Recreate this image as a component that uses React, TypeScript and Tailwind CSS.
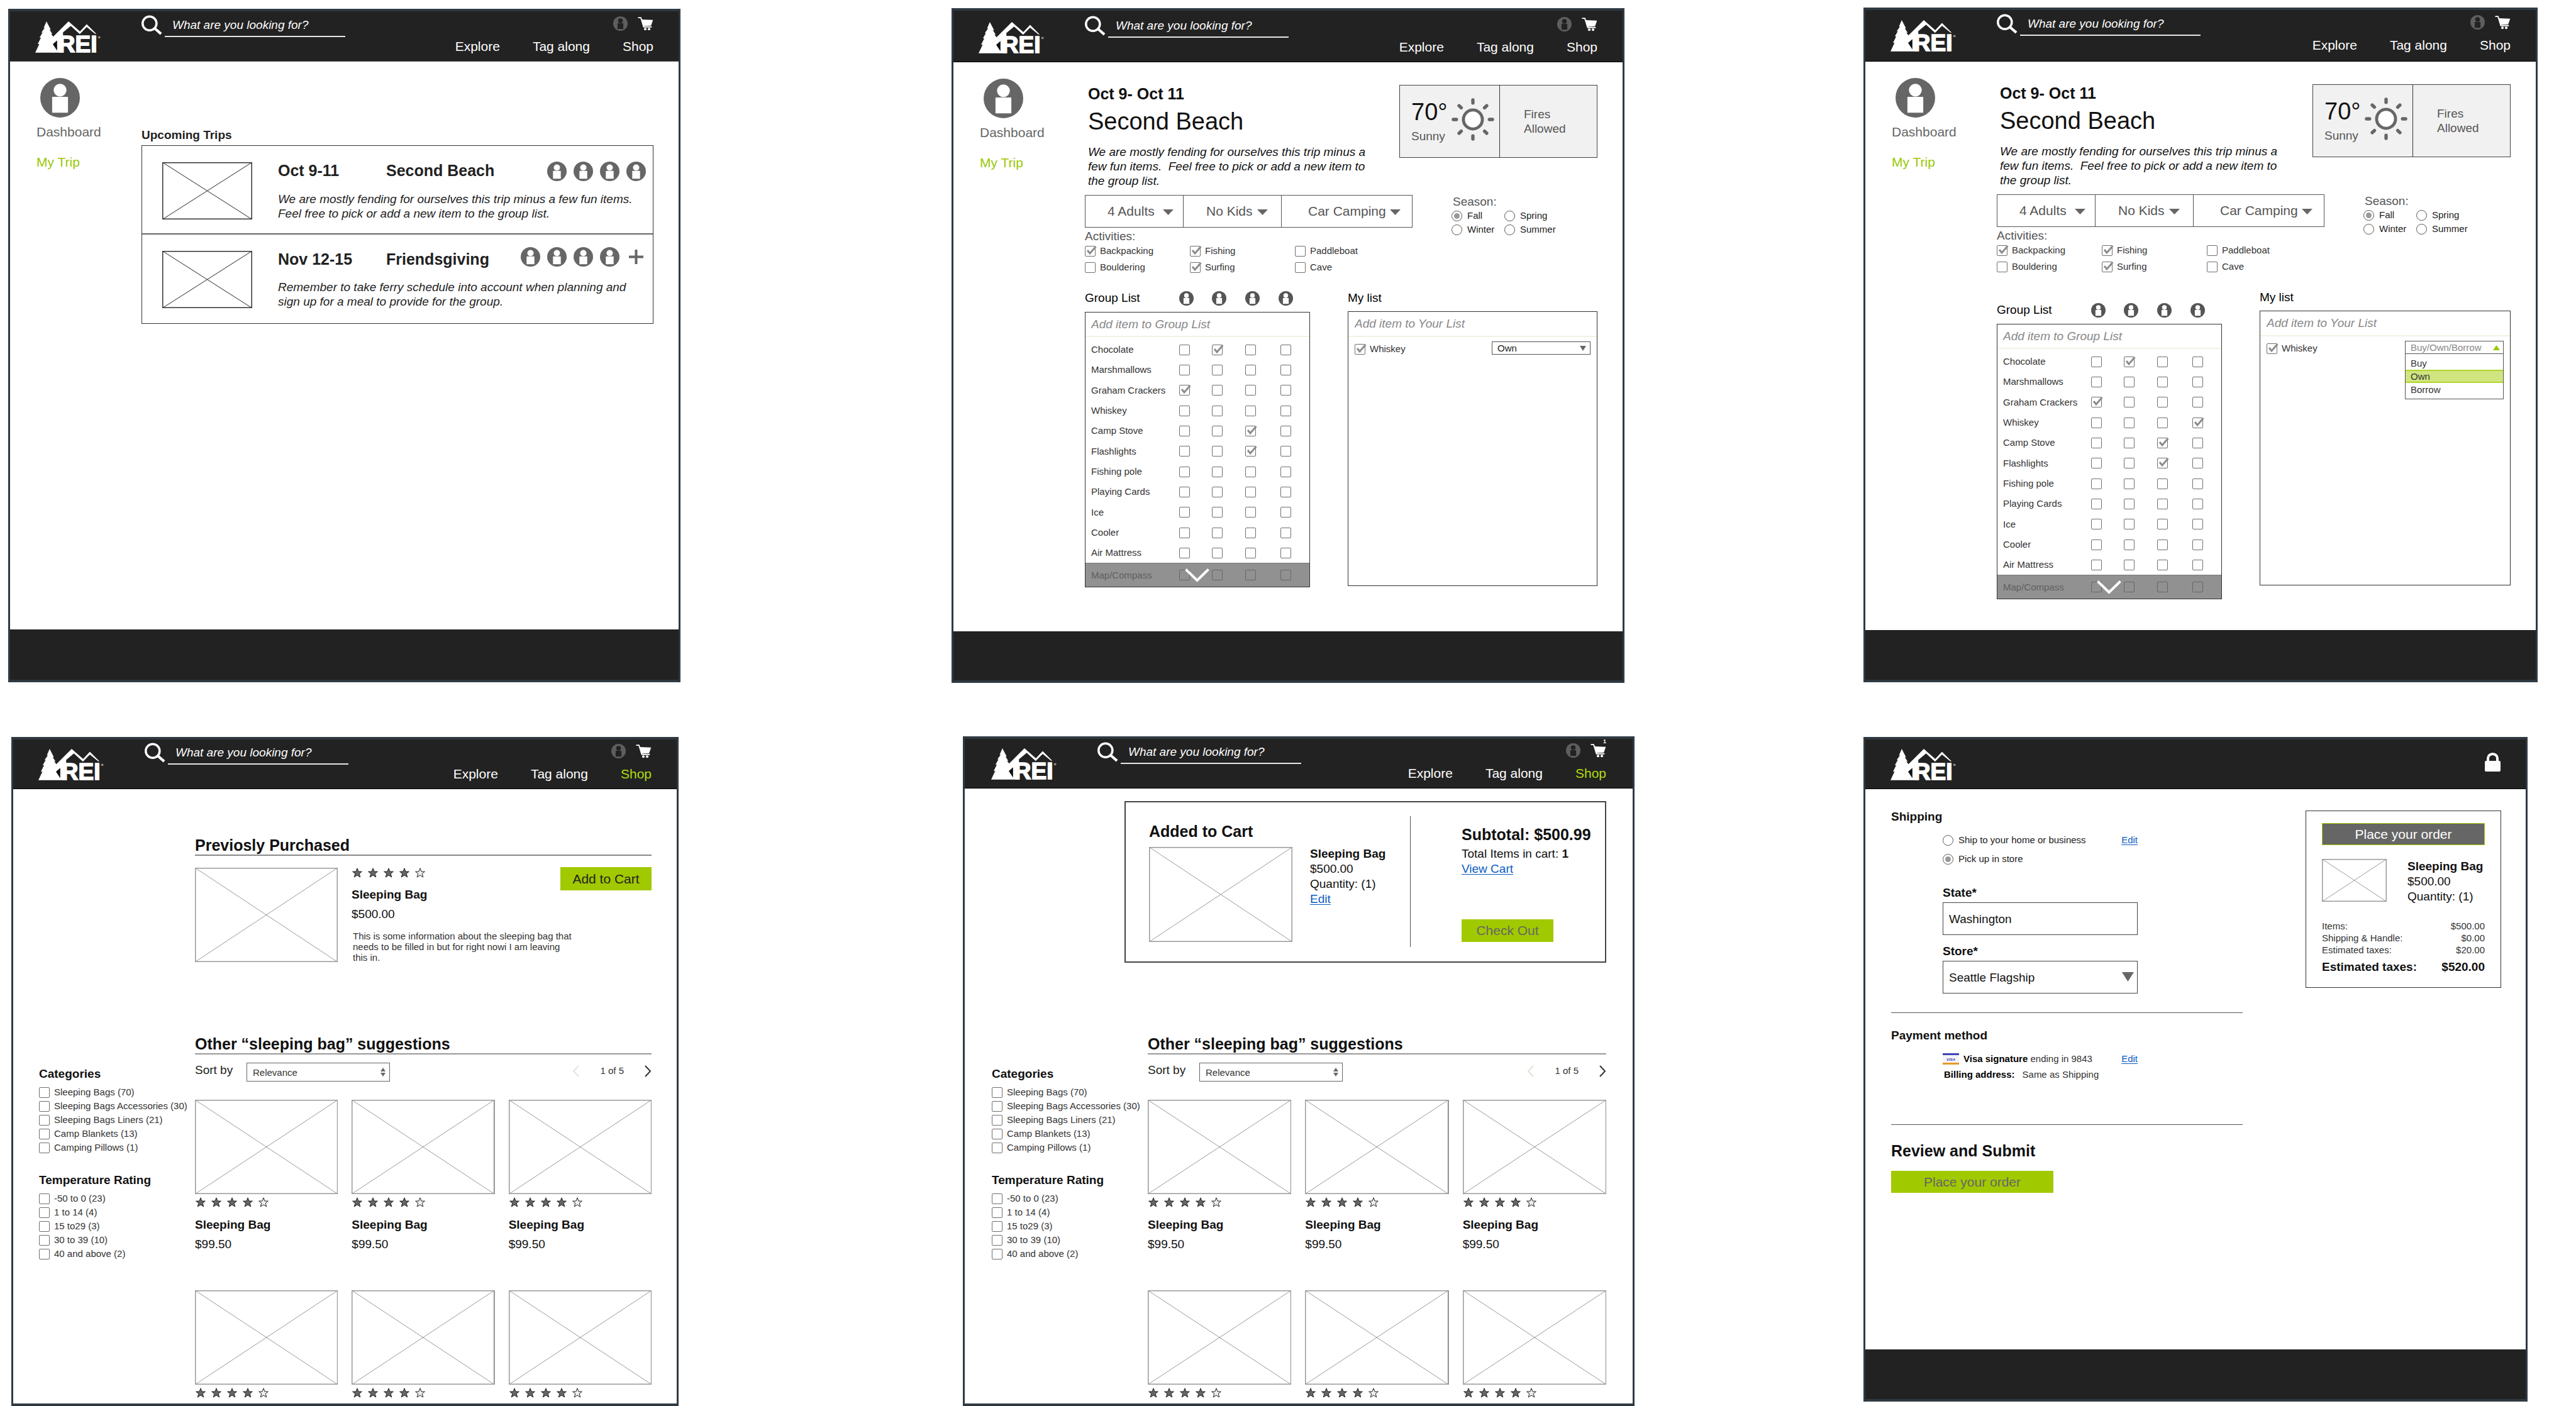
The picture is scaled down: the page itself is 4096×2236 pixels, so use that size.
import React, { ReactNode } from "react";

const link = "text-[#0b5cc0] underline underline-offset-2";

function Logo() {
  return (
    <svg className="h-[50px] w-[104px] shrink-0 overflow-visible" viewBox="50 44 320 154" role="img" aria-label="REI">
      <path
        fill="#fff"
        d="M105 44 L91 76 L97 75 L80 99 L86 98 L71 124 L78 123 L62 156 L70 154 L50 197 L186 197 L186 98 L224 66 L268 106 L302 72 L343 105 L349 105 L302 58 L269 93 L213 44 L138 119 L127 105 L134 106 L120 84 L126 85 Z"
      />
      <path fill="#111" d="M157 137 L136 156 L157 187 Z" />
      <text
        x="163"
        y="195"
        fontFamily="'Liberation Sans', Arial, sans-serif"
        fontWeight="700"
        fontSize="114"
        fill="#fff"
        stroke="#fff"
        strokeWidth="5"
      >
        REI
      </text>
      <circle cx="363" cy="122" r="6" fill="#8a8a8a" />
    </svg>
  );
}

function Avatar({ className, color = "#666", inner = "#fff" }: { className: string; color?: string; inner?: string }) {
  return (
    <svg className={"shrink-0 " + className} viewBox="0 0 65 65" aria-hidden="true">
      <circle cx="32.5" cy="32.5" r="32.5" fill={color} />
      <circle cx="32.5" cy="20" r="10.5" fill={inner} />
      <rect x="19.5" y="31" width="26" height="26" fill={inner} />
    </svg>
  );
}

function Cart() {
  return (
    <svg className="h-[23px] w-[25px]" viewBox="214 59 79 71" aria-hidden="true">
      <path d="M218 65 H230 L244 111 H282" fill="none" stroke="#fff" strokeWidth="6" strokeLinecap="round" strokeLinejoin="round" />
      <path d="M233 74 L291 76 L281 105 L242 107 Z" fill="#fff" />
      <circle cx="252" cy="122" r="6.5" fill="#fff" />
      <circle cx="271" cy="122" r="6.5" fill="#fff" />
    </svg>
  );
}

function Header({
  className,
  shop = false,
  count,
  secure = false,
}: {
  className: string;
  shop?: boolean;
  count?: string;
  secure?: boolean;
}) {
  return (
    <header className={"box-border flex items-start bg-[#222] " + className}>
      <a href="#home" className="mt-[15px] block">
        <Logo />
      </a>
      {secure ? (
        <svg className="mt-[21px] ml-auto h-[30px] w-[25px]" viewBox="0 0 25 30" role="img" aria-label="Secure">
          <path d="M5 14 V9 A7.5 7 0 0 1 20 9 V14" fill="none" stroke="#fff" strokeWidth="4" />
          <rect x="0" y="13" width="25" height="17" rx="2" fill="#fff" />
        </svg>
      ) : (
        <>
          <label className="mt-[5px] ml-[65px] flex items-start gap-[4px]">
            <svg className="h-[32px] w-[33px] shrink-0" viewBox="570 12 103 97" aria-hidden="true">
              <circle cx="610" cy="52" r="34.5" fill="none" stroke="#fff" strokeWidth="11" />
              <path d="M635 76 L667 104" stroke="#fff" strokeWidth="13" />
            </svg>
            <input
              type="search"
              aria-label="Search"
              placeholder="What are you looking for?"
              className="h-[35px] w-[287px] border-b-2 border-[#e5e5e5] bg-transparent pb-0.5 pl-3 text-[19px] text-white italic placeholder:text-white placeholder:opacity-100"
            />
          </label>
          <div className="ml-auto flex flex-col items-end">
            <div className="mt-[6px] flex h-6 gap-4">
              <button type="button" aria-label="Account">
                <Avatar className="size-[23px]" color="#5e5e5e" inner="#222" />
              </button>
              <button type="button" aria-label="Cart" className="relative">
                <Cart />
                {count && <span className="absolute -top-[6px] right-0 text-[9px] leading-[9px] font-bold text-white">{count}</span>}
              </button>
            </div>
            <nav className="mt-[11px] flex gap-[52px] text-[21px] leading-7 text-white">
              <a href="#explore">Explore</a>
              <a href="#tag-along">Tag along</a>
              <a href="#shop" className={shop ? "text-[#b2dd10]" : "text-white"}>
                Shop
              </a>
            </nav>
          </div>
        </>
      )}
    </header>
  );
}

function Frame({ className, children }: { className: string; children: ReactNode }) {
  return (
    <section className={"flex flex-col border-x-[3px] border-y-4 border-[#2f3942] bg-white " + className}>{children}</section>
  );
}

function AccountNav() {
  return (
    <aside className="w-[209px] shrink-0 pt-[26px] pl-[42px] text-[21px] leading-7">
      <Avatar className="ml-[6px] size-[63px]" />
      <a href="#dashboard" className="mt-[9px] block text-[#666]">
        Dashboard
      </a>
      <a href="#my-trip" className="mt-5 block text-[#99c800]">
        My Trip
      </a>
    </aside>
  );
}

function Placeholder({ className, stroke = "#999" }: { className: string; stroke?: string }) {
  return (
    <svg className={"block shrink-0 " + className} viewBox="0 0 100 100" preserveAspectRatio="none" role="img" aria-label="Image">
      <path
        d="M0 0 H100 V100 H0 Z"
        fill="none"
        stroke={stroke}
        strokeWidth="3"
        vectorEffect="non-scaling-stroke"
      />
      <path d="M0 0 L100 100 M100 0 L0 100" fill="none" stroke={stroke} strokeWidth="1" vectorEffect="non-scaling-stroke" />
    </svg>
  );
}

function Stars() {
  const star = "M8 0.8 L10 6 L15.4 6.1 L11.2 9.5 L12.8 15 L8 11.9 L3.2 15 L4.8 9.5 L0.6 6.1 L6 6 Z";
  return (
    <div className="flex h-4 gap-[9px] pl-px" role="img" aria-label="4 of 5">
      {[0, 1, 2, 3, 4].map((i) => (
        <svg key={i} className="size-4" viewBox="0 0 16 16">
          <path d={star} fill={i < 4 ? "#666" : "#eee"} stroke="#222" strokeWidth="1" />
        </svg>
      ))}
    </div>
  );
}

function Check({ checked = false, label, dim = false }: { checked?: boolean; label?: string; dim?: boolean }) {
  return (
    <span className="relative block size-[17px] shrink-0">
      <input
        type="checkbox"
        defaultChecked={checked}
        aria-label={label}
        className={"peer block size-[17px] appearance-none rounded-[2px] border " + (dim ? "border-[#666]" : "border-[#707070] bg-white")}
      />
      <svg className="pointer-events-none absolute -top-px left-0 hidden h-[18px] w-[19px] peer-checked:block" viewBox="0 0 19 18">
        <path d="M4 8 L8 13 L17.500 2" fill="none" stroke="#8c8c8c" strokeWidth="3" />
      </svg>
    </span>
  );
}

function CheckRow({ text, checked, className = "" }: { text: string; checked?: boolean; className?: string }) {
  return (
    <label className={"flex items-center gap-[7px] text-[15px] leading-5 whitespace-nowrap text-[#333] " + className}>
      <Check checked={checked} />
      {text}
    </label>
  );
}

function Radio({ name, text, checked, className = "" }: { name: string; text: string; checked?: boolean; className?: string }) {
  return (
    <label className={"flex items-center gap-2 text-[15px] leading-5 text-[#222] " + className}>
      <span className="relative block size-[17px] shrink-0">
        <input
          type="radio"
          name={name}
          defaultChecked={checked}
          className="peer block size-[17px] appearance-none rounded-full border border-[#555] bg-white"
        />
        <span className="pointer-events-none absolute inset-[4px] hidden rounded-full bg-[#999] peer-checked:block" />
      </span>
      {text}
    </label>
  );
}

function Triangle({ className, color = "#666", up = false }: { className: string; color?: string; up?: boolean }) {
  return (
    <svg className={"pointer-events-none absolute " + className} viewBox="0 0 10 10" preserveAspectRatio="none" aria-hidden="true">
      <path d={up ? "M5 0 L10 10 H0 Z" : "M0 0 H10 L5 10 Z"} fill={color} />
    </svg>
  );
}

function TripSelect({ text, label, className, pad, tri }: { text: string; label: string; className: string; pad: string; tri: string }) {
  return (
    <div className={"relative " + className}>
      <select aria-label={label} className={"h-full w-full appearance-none text-[21px] text-[#555] " + pad}>
        <option>{text}</option>
      </select>
      <Triangle className={"top-[22px] h-[9px] w-[17px] " + tri} />
    </div>
  );
}

type Trip = { date: string; name: string; lines: string[]; extra: boolean };

const trips: Trip[] = [
  {
    date: "Oct 9-11",
    name: "Second Beach",
    lines: ["We are mostly fending for ourselves this trip minus a few fun items.", "Feel free to pick or add a new item to the group list."],
    extra: false,
  },
  {
    date: "Nov 12-15",
    name: "Friendsgiving",
    lines: ["Remember to take ferry schedule into account when planning and", "sign up for a meal to provide for the group."],
    extra: true,
  },
];

function TripsPage() {
  return (
    <Frame className="mt-0.5 mr-[431px]">
      <Header className="h-20 border-b border-[#555] px-10 pt-px" />
      <div className="flex min-h-[903px]">
        <AccountNav />
        <main className="flex-1 pt-[105px] pr-10">
          <h2 className="text-[19px] leading-6 font-bold text-[#222]">Upcoming Trips</h2>
          <div className="mt-1 divide-y-2 divide-[#666] border border-[#333]">
            {trips.map((t) => (
              <article key={t.name} className="flex min-h-[141px] pt-[23px] pr-[11px] pl-8">
                <Placeholder className="mt-[3px] h-[91px] w-[143px]" stroke="#333" />
                <div className="ml-[41px] flex-1 text-[#222]">
                  <div className="flex text-[25px] leading-8 font-bold">
                    <h3 className="w-[172px]">{t.date}</h3>
                    <p>{t.name}</p>
                    <div className={"ml-auto flex h-8 items-center gap-[11px] " + (t.extra ? "-mt-1" : "mt-px")}>
                      {[0, 1, 2, 3].map((i) => (
                        <Avatar key={i} className="size-[31px]" />
                      ))}
                      {t.extra && (
                        <button type="button" aria-label="Invite" className="flex w-[31px] justify-center">
                          <svg className="size-[23px]" viewBox="0 0 23 23">
                            <path d="M11.500 0 V23 M0 11.500 H23" stroke="#666" strokeWidth="4" />
                          </svg>
                        </button>
                      )}
                    </div>
                  </div>
                  <p className="mt-[17px] text-[19px] leading-[23px] whitespace-nowrap italic">
                    {t.lines[0]}
                    <br />
                    {t.lines[1]}
                  </p>
                </div>
              </article>
            ))}
          </div>
        </main>
      </div>
      <footer className="h-20 bg-[#222]" />
    </Frame>
  );
}

const gear = [
  "Chocolate",
  "Marshmallows",
  "Graham Crackers",
  "Whiskey",
  "Camp Stove",
  "Flashlights",
  "Fishing pole",
  "Playing Cards",
  "Ice",
  "Cooler",
  "Air Mattress",
  "Map/Compass",
];

function GroupList({ taken, className = "" }: { taken: Record<string, number>; className?: string }) {
  return (
    <div className={"w-[358px] shrink-0 " + className}>
      <div className="grid h-6 grid-cols-[150px_52px_53px_53px_auto] items-center">
        <h3 className="text-[19px] leading-6 text-black">Group List</h3>
        {[0, 1, 2, 3].map((i) => (
          <Avatar key={i} className="size-[23px]" color="#555" />
        ))}
      </div>
      <div className="relative mt-[10px] border border-[#333]">
        <input
          aria-label="Add item to Group List"
          placeholder="Add item to Group List"
          className="block h-[39px] w-full border-b-2 border-[#f1f1e4] pl-[9px] text-[19px] italic placeholder:text-[#888] placeholder:opacity-100"
        />
        <table className="mt-[4px] h-[393px] w-full table-fixed border-collapse text-[15px] leading-5 text-[#333]">
          <colgroup>
            <col className="w-[149px]" />
            <col className="w-[52px]" />
            <col className="w-[53px]" />
            <col className="w-[56px]" />
            <col />
          </colgroup>
          <tbody>
            {gear.map((g, r) => {
              const last = r === gear.length - 1;
              return (
                <tr key={g} className={last ? "h-[37px] border-t border-[#777] bg-[#919191] text-[#606060]" : "h-8"}>
                  <th scope="row" className="pl-[9px] text-left font-normal whitespace-nowrap">
                    {g}
                  </th>
                  {[0, 1, 2, 3].map((c) => (
                    <td key={c}>
                      <Check checked={taken[g] === c} dim={last} label={g + " " + (c + 1)} />
                    </td>
                  ))}
                </tr>
              );
            })}
          </tbody>
        </table>
        <button type="button" aria-label="More items" className="absolute bottom-[7px] left-[158px]">
          <svg className="h-[22px] w-[39px]" viewBox="0 0 39 22">
            <path d="M1.500 1.500 L19.500 19 L37.500 1.500" fill="none" stroke="#fff" strokeWidth="4" />
          </svg>
        </button>
      </div>
    </div>
  );
}

function MyList({ open }: { open: boolean }) {
  return (
    <div className="flex-1">
      <h3 className="text-[19px] leading-6 text-black">My list</h3>
      <div className="mt-[9px] h-[437px] border border-[#333]">
        <input
          aria-label="Add item to Your List"
          placeholder="Add item to Your List"
          className="block h-[40px] w-full border-b-2 border-[#f1f1e4] pl-[10px] text-[19px] italic placeholder:text-[#888] placeholder:opacity-100"
        />
        <div className="mt-[7px] flex items-start justify-between px-[10px]">
          <CheckRow text="Whiskey" checked className="h-6" />
          {open ? (
            <div className="relative w-[157px] text-[15px] leading-5">
              <button
                type="button"
                aria-haspopup="listbox"
                aria-expanded="true"
                className="block h-[21px] w-full border border-[#555] pl-2 text-left leading-[19px] text-[#888]"
              >
                Buy/Own/Borrow
                <Triangle className="top-[7px] right-[6px] h-[8px] w-[11px]" color="#99c800" up />
              </button>
              <ul
                role="listbox"
                aria-label="Buy, own or borrow"
                className="absolute top-[20px] right-0 left-0 border border-[#555] bg-white pt-[4px] pb-1 leading-[21px] text-[#333]"
              >
                <li role="option" aria-selected="false" className="h-[21px] pl-2">
                  Buy
                </li>
                <li role="option" aria-selected="true" className="h-[21px] border-y-2 border-[#b0d62c] bg-[#d0e57f] pl-2 leading-[17px]">
                  Own
                </li>
                <li role="option" aria-selected="false" className="h-[21px] pl-2">
                  Borrow
                </li>
              </ul>
            </div>
          ) : (
            <div className="relative w-[157px]">
              <select aria-label="Whiskey status" className="block h-[21px] w-full appearance-none border border-[#555] pl-2 text-[15px] leading-[19px] text-[#222]">
                <option>Own</option>
              </select>
              <Triangle className="top-[7px] right-[7px] h-[8px] w-[10px]" />
            </div>
          )}
        </div>
      </div>
    </div>
  );
}

function TripPage({
  frame,
  header,
  body,
  footer,
  open,
  taken,
  group,
  id,
}: {
  frame: string;
  header: string;
  body: string;
  footer: string;
  open: boolean;
  taken: Record<string, number>;
  group: string;
  id: string;
}) {
  return (
    <Frame className={frame}>
      <Header className={header} />
      <div className={"flex " + body}>
        <AccountNav />
        <main className="min-w-0 flex-1 pt-[34px] pr-10">
          <div className="flex items-start justify-between">
            <div className="pl-[5px] text-[#111]">
              <p className="text-[25px] leading-8 font-bold">Oct 9- Oct 11</p>
              <h2 className="mt-[4px] text-[38px] leading-[48px]">Second Beach</h2>
              <p className="mt-[13px] text-[19px] leading-[23px] whitespace-pre italic">
                {"We are mostly fending for ourselves this trip minus a\nfew fun items.  Feel free to pick or add a new item to\nthe group list."}
              </p>
            </div>
            <div className="mt-[2px] flex h-[116px] w-[315px] border border-[#444] bg-[#f1f1f1] text-[19px] leading-[23px] text-[#555]">
              <div className="flex w-[159px] items-start border-r border-[#333] pl-[18px]">
                <div className="pt-[18px]">
                  <p className="w-[62px] text-[38px] leading-[48px] text-[#111]">70°</p>
                  <p className="mt-[3px]">Sunny</p>
                </div>
                <svg className="mt-[20px] ml-[2px] size-[68px]" viewBox="-35 -35 70 70" role="img" aria-label="Sunny">
                  <circle r="15.5" fill="#fff" stroke="#666" strokeWidth="5" />
                  {[0, 45, 90, 135, 180, 225, 270, 315].map((a) => (
                    <path key={a} d="M0 -27 V-32" stroke="#666" strokeWidth="5.500" strokeLinecap="round" transform={`rotate(${a})`} />
                  ))}
                </svg>
              </div>
              <p className="pt-[34px] pl-[38px]">
                Fires
                <br />
                Allowed
              </p>
            </div>
          </div>
          <div className="mt-[11px] flex items-start">
            <div className="w-[521px]">
              <div className="flex h-[52px] divide-x divide-[#555] border border-[#555]">
                <TripSelect text="4 Adults" label="Adults" className="w-[156px]" pad="pl-[35px]" tri="right-[15px]" />
                <TripSelect text="No Kids" label="Kids" className="w-[156px]" pad="pl-[36px]" tri="right-[21px]" />
                <TripSelect text="Car Camping" label="Trip type" className="flex-1" pad="pl-[42px]" tri="right-[18px]" />
              </div>
              <h3 className="mt-[3px] text-[19px] leading-[22px] text-[#555]">Activities:</h3>
              <div className="-mt-px grid grid-cols-[167px_167px_auto]">
                <CheckRow className="h-[26px]" text="Backpacking" checked />
                <CheckRow className="h-[26px]" text="Fishing" checked />
                <CheckRow className="h-[26px]" text="Paddleboat" />
                <CheckRow className="h-[26px]" text="Bouldering" />
                <CheckRow className="h-[26px]" text="Surfing" checked />
                <CheckRow className="h-[26px]" text="Cave" />
              </div>
            </div>
            <fieldset className="ml-[62px]">
              <legend className="pl-0.5 text-[19px] leading-[22px] text-[#555]">Season:</legend>
              <div className="grid grid-cols-[84px_auto]">
                <Radio className="h-[22px]" name={id} text="Fall" checked />
                <Radio className="h-[22px]" name={id} text="Spring" />
                <Radio className="h-[22px]" name={id} text="Winter" />
                <Radio className="h-[22px]" name={id} text="Summer" />
              </div>
            </fieldset>
          </div>
          <div className="mt-6 flex items-start gap-[60px]">
            <GroupList taken={taken} className={group} />
            <MyList open={open} />
          </div>
        </main>
      </div>
      <footer className={"bg-[#222] " + footer} />
    </Frame>
  );
}

const categories = ["Sleeping Bags (70)", "Sleeping Bags Accessories (30)", "Sleeping Bags Liners (21)", "Camp Blankets (13)", "Camping Pillows (1)"];
const ratings = ["-50 to 0 (23)", "1 to 14 (4)", "15 to29 (3)", "30 to 39 (10)", "40 and above (2)"];

function Filter({ title, items }: { title: string; items: string[] }) {
  return (
    <fieldset>
      <legend className="pb-[6px] text-[19px] leading-6 font-bold text-[#111]">{title}</legend>
      {items.map((i) => (
        <CheckRow key={i} text={i} className="h-[22px]" />
      ))}
    </fieldset>
  );
}

function Suggestions({ className }: { className: string }) {
  return (
    <div className={"flex items-start " + className}>
      <aside className="flex w-[248px] shrink-0 flex-col gap-[29px] pt-[51px]">
        <Filter title="Categories" items={categories} />
        <Filter title="Temperature Rating" items={ratings} />
      </aside>
      <main className="min-w-0 flex-1">
        <h2 className="border-b-2 border-[#999] text-[25px] leading-[30px] font-bold text-[#111]">Other “sleeping bag” suggestions</h2>
        <div className="mt-[13px] flex h-[30px] items-start">
          <label className="flex items-start text-[19px] leading-6 text-[#222]">
            <span className="w-[82px]">Sort by</span>
            <span className="relative block">
              <select className="block h-[30px] w-[228px] appearance-none border border-[#666] pt-[5px] pb-[3px] pl-[9px] text-[15px] leading-5 text-[#333]">
                <option>Relevance</option>
              </select>
              <Triangle className="top-[8px] right-[7px] h-[6px] w-[8px]" up />
              <Triangle className="top-[16px] right-[7px] h-[6px] w-[8px]" />
            </span>
          </label>
          <div className="mt-[3px] ml-auto flex items-center gap-[33px] text-[15px] leading-5 text-[#333]">
            <button type="button" aria-label="Previous page">
              <svg className="block h-[19px] w-[11px]" viewBox="0 0 11 19">
                <path d="M10 1 L2 9.500 L10 18" fill="none" stroke="#e4e4d4" strokeWidth="2" />
              </svg>
            </button>
            1 of 5
            <button type="button" aria-label="Next page">
              <svg className="block h-[19px] w-[11px]" viewBox="0 0 11 19">
                <path d="M1 1 L9 9.500 L1 18" fill="none" stroke="#333" strokeWidth="2" />
              </svg>
            </button>
          </div>
        </div>
        <div className="mt-[29px] grid grid-cols-3 gap-x-[22px] gap-y-[61px] text-[19px] leading-6 text-[#111]">
          {[0, 1, 2, 3, 4, 5].map((i) => (
            <article key={i}>
              <Placeholder className="mb-[5px] h-[150px] w-full" />
              <Stars />
              {i < 3 && (
                <>
                  <h3 className="mt-4 font-bold">Sleeping Bag</h3>
                  <p className="mt-[7px]">$99.50</p>
                </>
              )}
            </article>
          ))}
        </div>
      </main>
    </div>
  );
}

function ShopPage() {
  return (
    <Frame className="mt-px mr-[434px] ml-[5px]">
      <Header className="h-[79px] border-b border-black px-10" shop />
      <section className="min-h-[390px] pt-[74px] pr-10 pl-[289px] text-[19px] leading-6 text-[#111]">
        <h2 className="border-b-2 border-[#888] text-[25px] leading-[30px] font-bold">Previosly Purchased</h2>
        <div className="mt-[19px] flex items-start">
          <Placeholder className="h-[150px] w-[227px]" />
          <div className="ml-[22px] min-w-0 flex-1">
            <Stars />
            <h3 className="mt-[15px] font-bold">Sleeping Bag</h3>
            <p className="mt-[7px]">$500.00</p>
            <p className="mt-[14px] pl-0.5 text-[15px] leading-[17px] whitespace-nowrap text-[#333]">
              This is some information about the sleeping bag that
              <br />
              needs to be filled in but for right nowi I am leaving
              <br />
              this in.
            </p>
          </div>
          <button type="button" className="-mt-px h-[37px] w-[145px] shrink-0 bg-[#a1c900] text-[21px] text-[#222]">
            Add to Cart
          </button>
        </div>
      </section>
      <Suggestions className="pr-10 pb-[9px] pl-[41px]" />
    </Frame>
  );
}

function AddedPage() {
  return (
    <Frame className="mr-[364px] ml-[18px]">
      <Header className="h-[79px] border-b border-black px-[42px]" shop count="1" />
      <div className="min-h-[391px] pt-5 pr-[42px] pl-[254px]">
        <section className="flex h-[257px] items-start border-2 border-[#444] text-[19px] leading-6 text-[#111]">
          <div className="pt-[30px] pl-[37px]">
            <h2 className="text-[25px] leading-8 font-bold">Added to Cart</h2>
            <Placeholder className="mt-[9px] h-[151px] w-[228px]" />
          </div>
          <div className="w-[187px] pt-[70px] pl-7">
            <h3 className="font-bold">Sleeping Bag</h3>
            <p>$500.00</p>
            <p>Quantity: (1)</p>
            <a href="#edit" className={link}>
              Edit
            </a>
          </div>
          <div className="mt-[22px] h-[208px] border-l border-[#555]" />
          <div className="pt-[35px] pl-[81px]">
            <h3 className="text-[25px] leading-8 font-bold">Subtotal: $500.99</h3>
            <p className="mt-[3px]">
              Total Items in cart: <b>1</b>
            </p>
            <a href="#cart" className={link}>
              View Cart
            </a>
            <button type="button" className="mt-[68px] block h-9 w-[146px] bg-[#a1c900] text-[21px] text-[#666]">
              Check Out
            </button>
          </div>
        </section>
      </div>
      <Suggestions className="pr-[42px] pb-[9px] pl-[43px]" />
    </Frame>
  );
}

function VisaCard() {
  return (
    <svg className="h-[18px] w-[26px] shrink-0" viewBox="0 0 26 18" role="img" aria-label="Visa">
      <rect width="26" height="18" fill="#f4f4f8" />
      <rect width="26" height="3" fill="#3b45b5" />
      <rect y="15" width="26" height="3" fill="#e89a25" />
      <text x="13" y="12" textAnchor="middle" fontFamily="'Liberation Sans', Arial, sans-serif" fontSize="6" fontStyle="italic" fontWeight="700" fill="#3b45b5">
        VISA
      </text>
    </svg>
  );
}

const totals = [
  ["Items:", "$500.00"],
  ["Shipping & Handle:", "$0.00"],
  ["Estimated taxes:", "$20.00"],
];

function CheckoutPage() {
  return (
    <Frame className="mt-px mr-[77px]">
      <Header className="h-[79px] border-b border-black px-10" secure />
      <div className="flex min-h-[891px] items-start justify-between pr-[39px] pl-[41px] text-[19px] leading-6 text-[#111]">
        <main className="w-[559px] pt-8">
          <h2 className="font-bold">Shipping</h2>
          <div className="ml-[82px] w-[310px]">
            <div className="mt-[15px] flex items-center justify-between text-[15px] leading-5">
              <Radio name="shipping" text="Ship to your home or business" />
              <a href="#edit-shipping" className={link}>
                Edit
              </a>
            </div>
            <Radio name="shipping" text="Pick up in store" checked className="mt-[10px]" />
            <label className="mt-8 block">
              <span className="block pb-[3px] font-bold">State*</span>
              <input defaultValue="Washington" className="block h-[52px] w-full border border-[#444] pt-0.5 pl-[9px]" />
            </label>
            <label className="mt-[14px] block">
              <span className="block pb-[3px] font-bold">Store*</span>
              <span className="relative block">
                <select className="block h-[52px] w-full appearance-none border border-[#444] pt-0.5 pl-[9px]">
                  <option>Seattle Flagship</option>
                </select>
                <Triangle className="top-[18px] right-[6px] h-[15px] w-[19px]" />
              </span>
            </label>
          </div>
          <hr className="mt-[30px] border-0 border-t border-[#555]" />
          <h2 className="mt-[24px] font-bold">Payment method</h2>
          <div className="ml-[82px] w-[310px] text-[15px] leading-5 text-[#333]">
            <div className="mt-[15px] flex items-center">
              <VisaCard />
              <p className="ml-[7px]">
                <b className="text-black">Visa signature</b> ending in 9843
              </p>
              <a href="#edit-payment" className={"ml-auto " + link}>
                Edit
              </a>
            </div>
            <p className="mt-[5px] flex gap-3 pl-0.5">
              <b className="text-black">Billing address:</b>
              Same as Shipping
            </p>
          </div>
          <hr className="mt-[69px] border-0 border-t border-[#555]" />
          <h2 className="mt-[25px] text-[25px] leading-8 font-bold">Review and Submit</h2>
          <button type="button" className="mt-4 h-[35px] w-[258px] bg-[#a1c900] text-[21px] text-[#666]">
            Place your order
          </button>
        </main>
        <aside className="mt-[34px] w-[311px] border border-[#333] px-[25px] pt-[19px] pb-5">
          <button type="button" className="h-[35px] w-full border border-[#a1c900] bg-[#666] text-[21px] leading-7 text-white">
            Place your order
          </button>
          <div className="mt-[22px] flex items-start gap-[33px]">
            <Placeholder className="h-[68px] w-[103px]" />
            <div className="whitespace-nowrap">
              <h3 className="font-bold">Sleeping Bag</h3>
              <p>$500.00</p>
              <p>Quantity: (1)</p>
            </div>
          </div>
          <dl className="mt-[25px] text-[15px] leading-[19px] text-[#333]">
            {totals.map(([k, v]) => (
              <div key={k} className="flex justify-between">
                <dt>{k}</dt>
                <dd>{v}</dd>
              </div>
            ))}
            <div className="mt-[6px] flex justify-between text-[19px] leading-6 font-bold text-[#111]">
              <dt>Estimated taxes:</dt>
              <dd>$520.00</dd>
            </div>
          </dl>
        </aside>
      </div>
      <footer className="h-[79px] bg-[#222]" />
    </Frame>
  );
}

export default function App() {
  return (
    <div className="grid min-h-screen grid-cols-[minmax(0,1500fr)_minmax(0,1450fr)_minmax(0,1133fr)] content-start items-start gap-y-[85px] bg-white pt-3 pl-[13px] font-['Liberation_Sans',Arial,sans-serif]">
      <TripsPage />
      <TripPage
        id="season-saved"
        frame="mt-px mr-[380px]"
        header="h-[82px] border-b border-black px-10 pt-[3px]"
        body="min-h-[905px]"
        footer="h-[78px]"
        open={false}
        taken={{ Chocolate: 1, "Graham Crackers": 0, "Camp Stove": 2, Flashlights: 2 }}
        group="mt-0"
      />
      <TripPage
        id="season-editing"
        frame="mr-[61px]"
        header="h-[82px] border-b border-black px-10 pt-px"
        body="min-h-[904px]"
        footer="h-[79px]"
        open
        taken={{ Chocolate: 1, "Graham Crackers": 0, Whiskey: 3, "Camp Stove": 2, Flashlights: 2 }}
        group="mt-5"
      />
      <ShopPage />
      <AddedPage />
      <CheckoutPage />
    </div>
  );
}
